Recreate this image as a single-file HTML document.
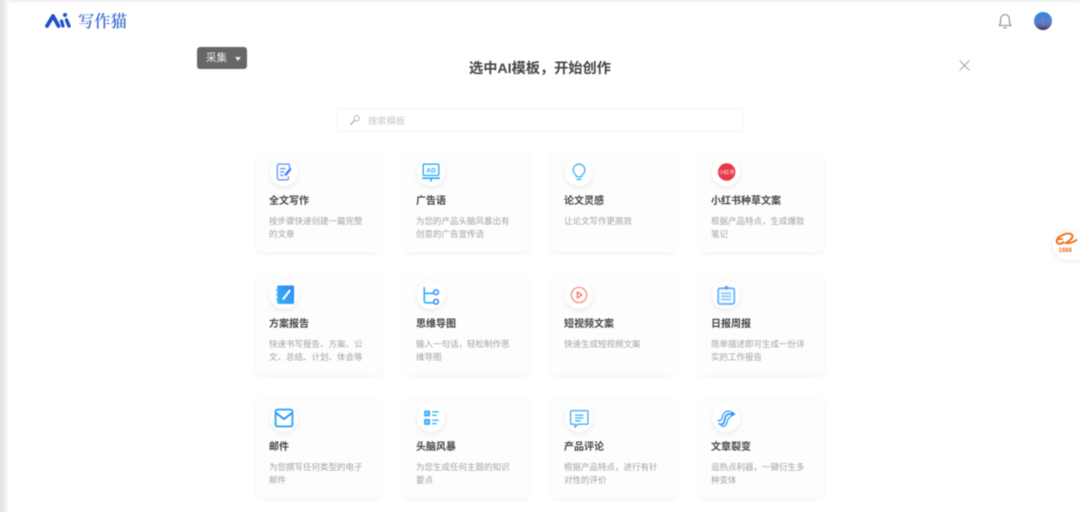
<!DOCTYPE html>
<html lang="zh">
<head>
<meta charset="utf-8">
<title>写作猫</title>
<style>
html,body{margin:0;padding:0;width:1080px;height:512px;overflow:hidden;background:#fff;}
body{position:relative;font-family:"Liberation Sans","Noto Sans CJK SC",sans-serif;}
.page{position:absolute;left:0;top:0;width:1080px;height:512px;overflow:hidden;filter:blur(.45px);}
.topline{position:absolute;left:0;top:0;width:1080px;height:2px;background:#eee;}
.leftshade{position:absolute;left:0;top:0;width:9px;height:512px;background:linear-gradient(90deg,#ddd,#fff);}
.abs{position:absolute;white-space:nowrap;}
.card{position:absolute;width:126px;height:101px;background:#fdfdfd;border-radius:5px;box-shadow:0 2px 4px rgba(0,0,0,.045);}
.ic{position:absolute;left:13.5px;top:6.5px;width:28px;height:28px;border-radius:50%;background:#fff;box-shadow:0 2px 6px rgba(0,0,0,.08);}
.ic svg{position:absolute;left:0;top:0;width:28px;height:28px;transform:scale(1.12);}
.t{position:absolute;left:13px;top:43.5px;font-size:10px;line-height:14px;font-weight:700;color:#444;white-space:nowrap;}
.d{position:absolute;left:13px;top:63.5px;width:104px;font-size:8.5px;line-height:13px;color:#a2a2a2;white-space:nowrap;}
</style>
</head>
<body>
<div class="page">
<div class="topline"></div>
<div class="leftshade"></div>

<svg class="abs" style="left:44px;top:11px" width="28" height="18" viewBox="0 0 28 18">
<path d="M3 15L9 5L14.5 15" fill="none" stroke="#1f4fc4" stroke-width="3.8" stroke-linecap="round" stroke-linejoin="round"/>
<path d="M17.5 10L19 15" stroke="#1f4fc4" stroke-width="3.2" stroke-linecap="round"/>
<path d="M22.5 9L25 15" stroke="#1f4fc4" stroke-width="3.4" stroke-linecap="round"/>
<circle cx="21" cy="4" r="2" fill="#1f4fc4"/>
</svg>
<div class="abs" style="left:78px;top:11px;font-family:'Noto Serif CJK SC',serif;font-size:16.3px;line-height:19px;color:#3d6dd0;font-weight:600">写作猫</div>

<div class="abs" style="left:197px;top:47px;width:50px;height:22px;background:#666;border-radius:3px;"></div>
<div class="abs" style="left:206px;top:50px;font-size:10.5px;line-height:16px;color:#f2f2f2">采集</div>
<div class="abs" style="left:235px;top:57px;width:0;height:0;border-left:3.5px solid transparent;border-right:3.5px solid transparent;border-top:4px solid #eee"></div>

<svg class="abs" style="left:996px;top:12px" width="18" height="18" viewBox="0 0 18 18" fill="none" stroke="#8c8c8c" stroke-width="1.1">
<path d="M3 13.5c1.2-1.2 1.6-2 1.6-4V7.200C4.600 4.600 6.500 2.600 9 2.600s4.400 2 4.400 4.600v2.300c0 2 .4 2.800 1.600 4z" stroke-linejoin="round"/>
<path d="M7.300 15.200c.5 1 2.900 1 3.400 0"/>
</svg>

<svg class="abs" style="left:1034px;top:12px" width="18" height="18" viewBox="0 0 18 18">
<defs>
<linearGradient id="av" x1="0" y1="0" x2="0" y2="1">
<stop offset="0" stop-color="#2f88dc"/><stop offset=".55" stop-color="#5a7fcc"/><stop offset=".8" stop-color="#5d64a4"/><stop offset="1" stop-color="#2a2d48"/>
</linearGradient>
</defs>
<circle cx="9" cy="9" r="9" fill="url(#av)"/>
<path d="M9 3.500V14" stroke="#a77fb4" stroke-width=".7"/>
</svg>

<div class="abs" style="left:469px;top:60px;font-size:14.2px;line-height:18px;font-weight:700;color:#444">选中AI模板，开始创作</div>

<svg class="abs" style="left:959px;top:60px" width="11" height="11" viewBox="0 0 11 11" stroke="#999" stroke-width="1" fill="none"><path d="M.7 .7L10.300 10.300M10.300 .7L.7 10.300"/></svg>

<div class="abs" style="left:337px;top:108px;width:404px;height:22px;border:1px solid #f2f2f2;border-radius:2px;background:#fff"></div>
<svg class="abs" style="left:349px;top:114px" width="12" height="12" viewBox="0 0 12 12" fill="none" stroke="#b3b3b3">
<circle cx="7.700" cy="4.300" r="2.700" stroke-width=".9"/><path d="M5.600 6.400L1.300 10.700" stroke-width="1.400"/>
</svg>
<div class="abs" style="left:368px;top:114.5px;font-size:9.3px;line-height:13px;color:#c6c8d0">搜索模板</div>

<!-- Row 1 -->
<div class="card" style="left:256px;top:151px">
<div class="ic"><svg viewBox="0 0 28 28" fill="none" stroke="#6f9dff" stroke-width="1.300"><path d="M19 11V8.500a1.500 1.500 0 0 0-1.500-1.500H9.500A1.500 1.500 0 0 0 8 8.500v11A1.500 1.500 0 0 0 9.500 21h7a1.500 1.500 0 0 0 1.500-1.500V18"/><path d="M10.500 11h5M10.500 14h3.500M10.500 17h3"/><path d="M15 17l5-6" stroke="#3d80ff" stroke-width="2.200"/></svg></div>
<div class="t">全文写作</div><div class="d">按步骤快速创建一篇完整<br>的文章</div>
</div>
<div class="card" style="left:403px;top:151px">
<div class="ic"><svg viewBox="0 0 28 28" fill="none" stroke="#29a9f5" stroke-width="1.200"><rect x="7" y="7" width="14" height="10" rx="1"/><path d="M6 19.500h16M14 19.500v3" stroke-width="1.400"/><text x="14" y="14.500" font-size="6" font-weight="700" fill="#29a9f5" stroke="none" text-anchor="middle" font-family="Liberation Sans">AD</text></svg></div>
<div class="t">广告语</div><div class="d">为您的产品头脑风暴出有<br>创意的广告宣传语</div>
</div>
<div class="card" style="left:551px;top:151px">
<div class="ic"><svg viewBox="0 0 28 28" fill="none" stroke="#4ab5f8" stroke-width="1.300"><path d="M14 7a5.200 5.200 0 0 0-3.200 9.300c.6.5.9 1.100.9 1.900h4.600c0-.8.3-1.400.9-1.900A5.200 5.200 0 0 0 14 7z"/><path d="M12 20.500h4" stroke-width="1.400"/></svg></div>
<div class="t">论文灵感</div><div class="d">让论文写作更高效</div>
</div>
<div class="card" style="left:698px;top:151px">
<div class="ic"><svg viewBox="0 0 28 28"><circle cx="14.600" cy="14" r="7.800" fill="#e8394a"/><text x="14.600" y="15.700" font-size="4.500" fill="#fff" text-anchor="middle" font-family="Liberation Sans,Noto Sans CJK SC">小红书</text></svg></div>
<div class="t">小红书种草文案</div><div class="d">根据产品特点，生成爆款<br>笔记</div>
</div>

<!-- Row 2 -->
<div class="card" style="left:256px;top:274px">
<div class="ic"><svg viewBox="0 0 28 28"><defs><linearGradient id="g1" x1="0" y1="1" x2="1" y2="0"><stop offset="0" stop-color="#35b5f8"/><stop offset="1" stop-color="#2f86f5"/></linearGradient></defs><rect x="8" y="5.500" width="15" height="16.500" rx="1" fill="url(#g1)"/><path d="M6.800 9.500h3M6.800 13.700h3M6.800 18h3" stroke="#35b5f8" stroke-width="1.100"/><path d="M13 18l6.500-8.500" stroke="#fff" stroke-width="1.900" fill="none"/></svg></div>
<div class="t">方案报告</div><div class="d">快速书写报告、方案、公<br>文、总结、计划、体会等</div>
</div>
<div class="card" style="left:403px;top:274px">
<div class="ic"><svg viewBox="0 0 28 28" fill="none" stroke-width="1.400"><path d="M8 7v12.500a1.500 1.500 0 0 0 1.500 1.500H16M8 12.500h8" stroke="#25b0f5"/><circle cx="18.500" cy="11.500" r="2.100" stroke="#3d8cf5"/><circle cx="18.500" cy="20" r="2.100" stroke="#3d8cf5"/></svg></div>
<div class="t">思维导图</div><div class="d">输入一句话，轻松制作思<br>维导图</div>
</div>
<div class="card" style="left:551px;top:274px">
<div class="ic"><svg viewBox="0 0 28 28" fill="none"><circle cx="14" cy="14" r="6.800" stroke="#fb8f7f" stroke-width="1.200"/><path d="M12.500 11.300v5.400l4-2.700z" stroke="#f4695a" stroke-width="1.100" stroke-linejoin="round"/></svg></div>
<div class="t">短视频文案</div><div class="d">快速生成短视频文案</div>
</div>
<div class="card" style="left:698px;top:274px">
<div class="ic"><svg viewBox="0 0 28 28" fill="none"><rect x="7" y="8" width="14.500" height="14" rx="1.500" stroke="#4fa8fb" stroke-width="1.300" fill="#eef7ff"/><circle cx="14.300" cy="7.500" r="1.700" fill="#4fa8fb"/><path d="M10 12.500h8.500M10 15.200h8.500M10 18h8.500" stroke="#5cb6fb" stroke-width="1"/></svg></div>
<div class="t">日报周报</div><div class="d">简单描述即可生成一份详<br>实的工作报告</div>
</div>

<!-- Row 3 -->
<div class="card" style="left:256px;top:397px">
<div class="ic"><svg viewBox="0 0 28 28" fill="none" stroke-width="1.700"><rect x="6.500" y="6.500" width="15" height="15" rx="1.500" stroke="#2ba7f6"/><path d="M7 9.500l7 5.500 7-5.500" stroke="#3390f5"/></svg></div>
<div class="t">邮件</div><div class="d">为您撰写任何类型的电子<br>邮件</div>
</div>
<div class="card" style="left:403px;top:397px">
<div class="ic"><svg viewBox="0 0 28 28" fill="none" stroke-width="1.200" stroke="#2ba7f6"><rect x="8.500" y="8" width="4" height="4" fill="#7cc8fa"/><rect x="8.500" y="15.500" width="4" height="4" fill="#7cc8fa"/><path d="M15 8.500h6M15 11.500h4M15 16h6M15 19h4" stroke-width="1.100"/></svg></div>
<div class="t">头脑风暴</div><div class="d">为您生成任何主题的知识<br>要点</div>
</div>
<div class="card" style="left:551px;top:397px">
<div class="ic"><svg viewBox="0 0 28 28" fill="none" stroke="#46aef8" stroke-width="1.200"><path d="M7 7.500h14.500a.5.500 0 0 1 .5.500v11a.5.500 0 0 1-.5.500H13l-2.500 2.500v-2.500H7a.5.500 0 0 1-.5-.500V8a.5.500 0 0 1 .5-.500z"/><path d="M10.500 11.500h7.500M10.500 14h7.500M10.500 16.500h5"/></svg></div>
<div class="t">产品评论</div><div class="d">根据产品特点，进行有针<br>对性的评价</div>
</div>
<div class="card" style="left:698px;top:397px">
<div class="ic"><svg viewBox="0 0 28 28" fill="none" stroke-width="1.400"><path d="M7.500 19c2.500 1.500 4.500.5 5-2s1-6 4-6.500h3" stroke="#2f86f5"/><path d="M9.500 21c2.500 1 4.500 0 5.200-2.500s1-5 3.800-5.500" stroke="#4ab5f8"/><path d="M6.500 16c2 1 3.500 0 4-2s1.500-5.500 4.500-6h3" stroke="#4ab5f8"/><path d="M18.500 7.500l4 3-4 2.500z" fill="#2f86f5" stroke="none"/></svg></div>
<div class="t">文章裂变</div><div class="d">追热点利器，一键衍生多<br>种变体</div>
</div>

<!-- 1688 float -->
<div class="abs" style="left:1053px;top:231px;width:34px;height:29px;background:#fff;border-radius:14px 0 0 14px;box-shadow:0 1px 6px rgba(0,0,0,.09)"></div>
<svg class="abs" style="left:1055px;top:231px" width="25" height="20" viewBox="0 0 25 20" fill="none" stroke="#f0701a" stroke-width="1.900" stroke-linecap="round">
<path d="M7 4.500C3 5.500 1 9 2 11.500c1 2 5 1.500 6.500-.5M3 8h4"/>
<path d="M7 4.500C11 1.800 17 2 17.500 5c.4 2.500-3.500 5-6.500 7 3 .5 7-.5 10.500-3"/>
</svg>
<div class="abs" style="left:1058.5px;top:246.5px;font-size:6px;line-height:8px;font-weight:700;color:#f0701a">1688</div>
</div>
</body>
</html>
